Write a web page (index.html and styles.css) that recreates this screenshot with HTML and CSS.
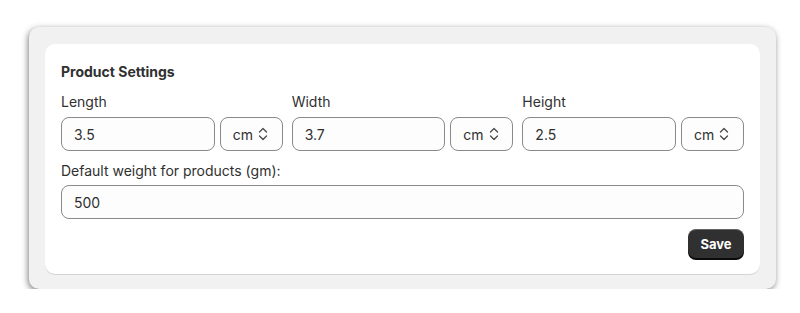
FILE: index.html
```html
<!DOCTYPE html>
<html lang="en">
<head>
    <meta charset="UTF-8">
    <meta name="viewport" content="width=device-width, initial-scale=1.0">
    <title>Product Settings</title>
    <link rel="stylesheet" href="styles.css">
</head>
<body>
    <div class="frame">
        <div class="card">
            <h2 class="title">Product Settings</h2>

            <!-- dimensions -->
            <div class="dims">
                <div class="field">
                    <label class="label">Length</label>
                    <div class="pair">
                        <div class="input">3.5</div>
                        <div class="select">cm
                            <svg viewBox="0 0 12 16"><path d="M2.5 6 6 2.5 9.5 6M2.5 10 6 13.5 9.5 10"/></svg>
                        </div>
                    </div>
                </div>
                <div class="field">
                    <label class="label">Width</label>
                    <div class="pair">
                        <div class="input">3.7</div>
                        <div class="select">cm
                            <svg viewBox="0 0 12 16"><path d="M2.5 6 6 2.5 9.5 6M2.5 10 6 13.5 9.5 10"/></svg>
                        </div>
                    </div>
                </div>
                <div class="field">
                    <label class="label">Height</label>
                    <div class="pair">
                        <div class="input">2.5</div>
                        <div class="select">cm
                            <svg viewBox="0 0 12 16"><path d="M2.5 6 6 2.5 9.5 6M2.5 10 6 13.5 9.5 10"/></svg>
                        </div>
                    </div>
                </div>
            </div>

            <!-- weight -->
            <label class="label weight-label">Default weight for products (gm):</label>
            <div class="input">500</div>

            <div class="actions">
                <button class="btn">Save</button>
            </div>
        </div>
    </div>
</body>
</html>
```

FILE: styles.css
```css
html,body{
    margin: 0;
    padding: 0;
}
body{
    background: #fff;
    font-family: Inter, "Noto Sans", sans-serif;
    color: #303030;
    padding: 27px 0 0 29px;
}
/* outer grey frame */
.frame{
    width: 747px;
    height: 262px;
    box-sizing: border-box;
    padding: 17px 16px 15px 16px;
    background: #f1f1f1;
    border-radius: 10px;
    box-shadow: -1px 2px 6px rgba(0,0,0,.5);
}
.card{
    height: 230px;
    box-sizing: border-box;
    padding: 18px 16px 16px;
    background: #fff;
    border-radius: 10px;
    box-shadow: 0 1px 0 #d4d4d4;
    display: flex;
    flex-direction: column;
}
.title{
    margin: 0 0 10px;
    font-size: 14px;
    font-weight: 650;
    line-height: 20px;
}
.label{
    display: block;
    font-size: 14px;
    line-height: 20px;
    margin-bottom: 5px;
}
.weight-label{
    margin-top: 10px;
    margin-bottom: 4px;
}
.dims{
    display: flex;
    gap: 9px;
}
.field{
    flex: 1;
}
.pair{
    display: flex;
    gap: 5px;
}
.input,
.select{
    height: 34px;
    box-sizing: border-box;
    border: 1px solid #8a8a8a;
    border-radius: 8px;
    background: #fdfdfd;
    font-size: 14px;
    display: flex;
    align-items: center;
}
.input{
    flex: 1;
    padding-left: 12px;
}
.select{
    width: 63px;
    flex: none;
    padding-left: 12px;
    gap: 4px;
}
.select svg{
    width: 12px;
    height: 16px;
    fill: none;
    stroke: #4a4a4a;
    stroke-width: 1.3;
    stroke-linecap: round;
    stroke-linejoin: round;
}
.actions{
    margin-top: 10px;
    display: flex;
    justify-content: flex-end;
}
.btn{
    width: 56px;
    height: 29px;
    border: 0;
    border-radius: 8px;
    background: #303030;
    color: #fff;
    font-family: inherit;
    font-size: 13px;
    font-weight: 700;
    box-shadow: inset 0 1px 0 rgba(255,255,255,.25), 0 2px 0 #0b0b0b;
}
```
